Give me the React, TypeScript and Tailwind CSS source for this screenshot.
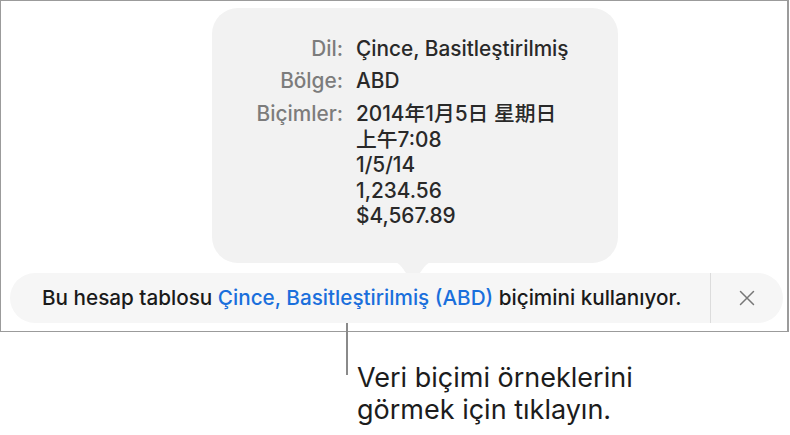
import React from "react";

const font = { fontFamily: "Inter, 'Noto Sans CJK SC', sans-serif" };

function InfoPopover() {
  return (
    <div className="relative ml-[211px] w-[406px] h-[255px] rounded-[26px] bg-[#f2f2f2] pt-[28px]">
      <div className="grid grid-cols-[131px_1fr] gap-x-[13px] text-[20.8px] leading-[25px] font-[450]">
        <div className="text-right text-[#7c7c7c]">Dil:</div>
        <div className="text-[#292929]">Çince, Basitleştirilmiş</div>
        <div className="text-right text-[#7c7c7c] mt-[7px]">Bölge:</div>
        <div className="text-[#292929] mt-[7px]">ABD</div>
        <div className="text-right text-[#7c7c7c] mt-[8px]">Biçimler:</div>
        <div className="text-[#292929] mt-[8px] leading-[25.5px]">
          <div>2014年1月5日 星期日</div>
          <div>上午7:08</div>
          <div>1/5/14</div>
          <div>1,234.56</div>
          <div>$4,567.89</div>
        </div>
      </div>
      {/* pointer toward the banner below */}
      <svg className="absolute left-[179px] top-[253px]" width="44" height="24" viewBox="0 0 44 24">
        <path d="M0 0 C12 0 17 19 22 22 C27 19 32 0 44 0 Z" fill="#f2f2f2" />
      </svg>
    </div>
  );
}

function Banner() {
  return (
    <div className="relative ml-[9px] mr-[4px] mt-[10px] h-[50px] rounded-full bg-[#f6f6f6] flex items-center">
      <div className="flex-1 pl-[32px] text-[20.7px] font-[450] text-[#1a1a1a] whitespace-nowrap">
        Bu hesap tablosu{" "}
        <span className="text-[#1a6fdc]">Çince, Basitleştirilmiş (ABD)</span> biçimini kullanıyor.
      </div>
      <div className="w-px self-stretch bg-[#dcdcdc]" />
      <div className="w-[72px] flex items-center justify-center">
        <svg width="16" height="16" viewBox="0 0 16 16" fill="none" stroke="#777777" strokeWidth="1.5" strokeLinecap="round">
          <path d="M1.5 1.5 L14.5 14.5 M14.5 1.5 L1.5 14.5" />
        </svg>
      </div>
    </div>
  );
}

export default function App() {
  return (
    <div className="w-[790px] h-[435px] bg-white relative overflow-hidden" style={font}>
      <div className="w-[789px] h-[332px] border border-r-2 border-[#9b9b9b] pt-[7px]">
        <InfoPopover />
        <Banner />
      </div>
      <div className="flex">
        <div className="ml-[346px] -mt-[10px] w-[2px] h-[53px] bg-[#8a8a8a]" />
        <div className="ml-[9px] mt-[30px] text-[27px] leading-[32px] text-[#1c1c1c]">
          <div>Veri biçimi örneklerini</div>
          <div>görmek için tıklayın.</div>
        </div>
      </div>
    </div>
  );
}
